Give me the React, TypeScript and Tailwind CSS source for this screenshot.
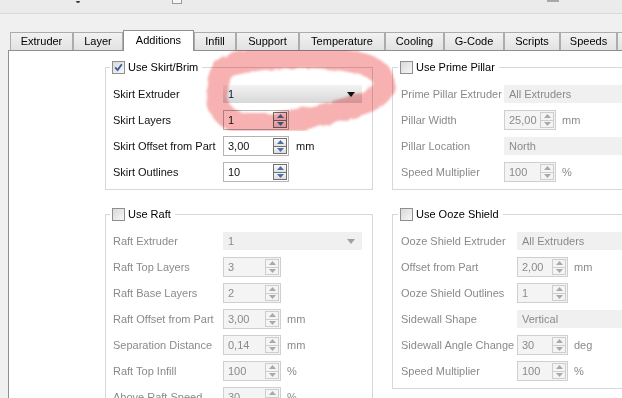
import React from "react";

function Check({ checked }: { checked?: boolean }) {
  return (
    <span className="inline-flex h-[13px] w-[13px] shrink-0 items-center justify-center border border-[#8e8f8f] bg-gradient-to-br from-[#d9d9d9] to-[#f7f7f7]">
      {checked && (
        <svg width="9" height="9" viewBox="0 0 9 9">
          <path d="M1.2 4.4 L3.6 7 L7.8 1.2" stroke="#3b5b9e" strokeWidth="1.8" fill="none" />
        </svg>
      )}
    </span>
  );
}

function SpinBtns({ disabled }: { disabled?: boolean }) {
  const tri = disabled ? "#a9a9a9" : "#4a6eae";
  return (
    <div
      className={
        disabled
          ? "flex h-[16px] w-[14px] shrink-0 flex-col border border-[#cdcdcd]"
          : "flex h-[16px] w-[14px] shrink-0 flex-col border border-[#707070]"
      }
    >
      <div
        className={
          disabled
            ? "flex flex-1 items-center justify-center border-b border-[#cdcdcd] bg-[#f4f4f4]"
            : "flex flex-1 items-center justify-center border-b border-[#707070] bg-gradient-to-b from-[#fbfbfb] to-[#e2e2e2]"
        }
      >
        <svg width="7" height="4" viewBox="0 0 7 4">
          <path d="M0 4 L3.5 0 L7 4 Z" fill={tri} />
        </svg>
      </div>
      <div
        className={
          disabled
            ? "flex flex-1 items-center justify-center bg-[#f4f4f4]"
            : "flex flex-1 items-center justify-center bg-gradient-to-b from-[#f4f4f4] to-[#dcdcdc]"
        }
      >
        <svg width="7" height="4" viewBox="0 0 7 4">
          <path d="M0 0 L7 0 L3.5 4 Z" fill={tri} />
        </svg>
      </div>
    </div>
  );
}

function Spin({ value, w, disabled }: { value: string; w: string; disabled?: boolean }) {
  return (
    <div
      className={
        (disabled
          ? "flex h-[20px] shrink-0 items-center border border-[#cfcfcf] bg-[#f4f4f4] text-[#8a8a8a] "
          : "flex h-[20px] shrink-0 items-center border border-[#b4b4b4] bg-white text-[#111] ") + w
      }
    >
      <span className="flex-1 pl-[4px]">{value}</span>
      <div className="mr-[1px]">
        <SpinBtns disabled={disabled} />
      </div>
    </div>
  );
}

function Combo({ value, w, disabled }: { value: string; w: string; disabled?: boolean }) {
  return (
    <div
      className={
        (disabled
          ? "flex h-[18px] shrink-0 items-center bg-[#f0f0f0] text-[#8a8a8a] "
          : "flex h-[18px] shrink-0 items-center bg-gradient-to-b from-[#f3f3f3] to-[#d8d8d8] text-[#0c1a3a] ") + w
      }
    >
      <span className="flex-1 pl-[5px]">{value}</span>
      <svg width="8" height="5" viewBox="0 0 8 5" className="mr-[7px]">
        <path d="M0 0 L8 0 L4 5 Z" fill={disabled ? "#a0a0a0" : "#111"} />
      </svg>
    </div>
  );
}

type RowDef = {
  label: string;
  kind: "combo" | "spin";
  value: string;
  w?: string;
  unit?: string;
};

function Group({
  title,
  checked,
  disabled,
  labelW,
  pl,
  rows,
}: {
  title: string;
  checked?: boolean;
  disabled?: boolean;
  labelW: string;
  pl: string;
  rows: RowDef[];
}) {
  return (
    <fieldset className={"w-[268px] shrink-0 border border-[#d8d8d8] pb-[4px] " + pl}>
      <legend className="-ml-[3px] flex h-[14px] items-center gap-[3px] pl-[2px] pr-[4px] text-[#000]">
        <Check checked={checked} />
        <span>{title}</span>
      </legend>
      <div className="flex flex-col pt-[7px]">
        {rows.map((r) => (
          <div key={r.label} className="flex h-[26px] items-center">
            <span
              className={
                (disabled ? "shrink-0 text-[#8a8a8a] " : "shrink-0 text-[#111] ") + labelW
              }
            >
              {r.label}
            </span>
            {r.kind === "combo" ? (
              <Combo value={r.value} w={r.w || "w-[139px]"} disabled={disabled} />
            ) : (
              <Spin value={r.value} w={r.w || "w-[58px]"} disabled={disabled} />
            )}
            {r.unit && (
              <span className={disabled ? "ml-[6px] text-[#8a8a8a]" : "ml-[7px] text-[#111]"}>
                {r.unit}
              </span>
            )}
          </div>
        ))}
      </div>
    </fieldset>
  );
}

const tabs: { name: string; w: string; active?: boolean }[] = [
  { name: "Extruder", w: "w-[63px]" },
  { name: "Layer", w: "w-[50px]" },
  { name: "Additions", w: "w-[71px]", active: true },
  { name: "Infill", w: "w-[42px]" },
  { name: "Support", w: "w-[63px]" },
  { name: "Temperature", w: "w-[86px]" },
  { name: "Cooling", w: "w-[59px]" },
  { name: "G-Code", w: "w-[60px]" },
  { name: "Scripts", w: "w-[56px]" },
  { name: "Speeds", w: "w-[57px]" },
  { name: "", w: "w-[60px]" },
];

export default function App() {
  return (
    <div
      className="relative flex h-[398px] w-[622px] flex-col overflow-hidden bg-[#f0f0f0] text-[11px] leading-none"
      style={{ fontFamily: '"Liberation Sans", Arial, sans-serif' }}
    >
      {/* top strip */}
      <div className="flex h-[14px] shrink-0 items-start border-b border-[#d9d9d9] bg-[#ebebeb]">
        <div className="ml-[76px] h-[3px] w-[4px] rounded-b-[2px] border-b-2 border-[#3a3a3a]" />
        <div className="ml-[92px] h-[4px] w-[10px] border-x border-b border-[#9a9a9a] bg-[#f6f6f6]" />
        <div className="ml-[365px] h-[2px] w-[12px] bg-[#a8a8a8]" />
      </div>

      {/* tabs */}
      <div className="mt-[16px] flex h-[20px] shrink-0 items-end pl-[10px]">
        {tabs.map((t, i) =>
          t.active ? (
            <div
              key={i}
              className={
                "relative z-10 -mb-px flex h-[21px] shrink-0 items-center justify-center border-x border-t border-[#8e8f8f] bg-white pb-[2px] text-[#000] " +
                t.w
              }
            >
              {t.name}
            </div>
          ) : (
            <div
              key={i}
              className={
                "flex h-[18px] shrink-0 items-center justify-center border-l border-t border-r border-[#acacac] bg-gradient-to-b from-[#f2f2f2] to-[#e2e2e2] text-[#000] " +
                t.w
              }
            >
              {t.name}
            </div>
          )
        )}
      </div>

      {/* panel */}
      <div className="ml-[8px] flex-1 border-l border-t border-[#8e8f8f] bg-white pl-[96px] pt-[9px]">
        <div className="flex items-start">
          <Group
            title="Use Skirt/Brim"
            checked
            labelW="w-[110px]"
            pl="pl-[7px]"
            rows={[
              { label: "Skirt Extruder", kind: "combo", value: "1" },
              { label: "Skirt Layers", kind: "spin", value: "1", w: "w-[66px]" },
              { label: "Skirt Offset from Part", kind: "spin", value: "3,00", w: "w-[66px]", unit: "mm" },
              { label: "Skirt Outlines", kind: "spin", value: "10", w: "w-[66px]" },
            ]}
          />
          <div className="ml-[19px]">
            <Group
              title="Use Prime Pillar"
              disabled
              labelW="w-[103px]"
              pl="pl-[8px]"
              rows={[
                { label: "Prime Pillar Extruder", kind: "combo", value: "All Extruders", w: "w-[150px]" },
                { label: "Pillar Width", kind: "spin", value: "25,00", w: "w-[52px]", unit: "mm" },
                { label: "Pillar Location", kind: "combo", value: "North", w: "w-[150px]" },
                { label: "Speed Multiplier", kind: "spin", value: "100", w: "w-[52px]", unit: "%" },
              ]}
            />
          </div>
        </div>
        <div className="mt-[17px] flex items-start">
          <Group
            title="Use Raft"
            disabled
            labelW="w-[110px]"
            pl="pl-[7px]"
            rows={[
              { label: "Raft Extruder", kind: "combo", value: "1" },
              { label: "Raft Top Layers", kind: "spin", value: "3" },
              { label: "Raft Base Layers", kind: "spin", value: "2" },
              { label: "Raft Offset from Part", kind: "spin", value: "3,00", unit: "mm" },
              { label: "Separation Distance", kind: "spin", value: "0,14", unit: "mm" },
              { label: "Raft Top Infill", kind: "spin", value: "100", unit: "%" },
              { label: "Above Raft Speed", kind: "spin", value: "30", unit: "%" },
            ]}
          />
          <div className="ml-[19px]">
            <Group
              title="Use Ooze Shield"
              disabled
              labelW="w-[116px]"
              pl="pl-[8px]"
              rows={[
                { label: "Ooze Shield Extruder", kind: "combo", value: "All Extruders", w: "w-[140px]" },
                { label: "Offset from Part", kind: "spin", value: "2,00", w: "w-[51px]", unit: "mm" },
                { label: "Ooze Shield Outlines", kind: "spin", value: "1", w: "w-[51px]" },
                { label: "Sidewall Shape", kind: "combo", value: "Vertical", w: "w-[140px]" },
                { label: "Sidewall Angle Change", kind: "spin", value: "30", w: "w-[51px]", unit: "deg" },
                { label: "Speed Multiplier", kind: "spin", value: "100", w: "w-[51px]", unit: "%" },
              ]}
            />
          </div>
        </div>
      </div>

      {/* hand-drawn highlight */}
      <svg
        className="pointer-events-none absolute left-0 top-0 z-20 mix-blend-multiply"
        width="622"
        height="398"
        viewBox="0 0 622 398"
      >
        <defs>
          <filter id="rough" x="-10%" y="-10%" width="120%" height="120%">
            <feTurbulence type="fractalNoise" baseFrequency="0.09" numOctaves="2" seed="3" />
            <feDisplacementMap in="SourceGraphic" scale="5" />
            <feGaussianBlur stdDeviation="0.8" />
          </filter>
        </defs>
        <path
          d="M230 65 C262 57 305 55 337 59 C368 63 384 70 384 84 C384 99 360 105 334 112 C307 119 280 124 252 124 C228 124 217 111 217 95 C217 80 220 69 230 65 Z"
          fill="none"
          stroke="#f7a3a3"
          strokeOpacity="0.85"
          strokeWidth="22"
          strokeLinejoin="round"
          filter="url(#rough)"
        />
      </svg>
    </div>
  );
}
